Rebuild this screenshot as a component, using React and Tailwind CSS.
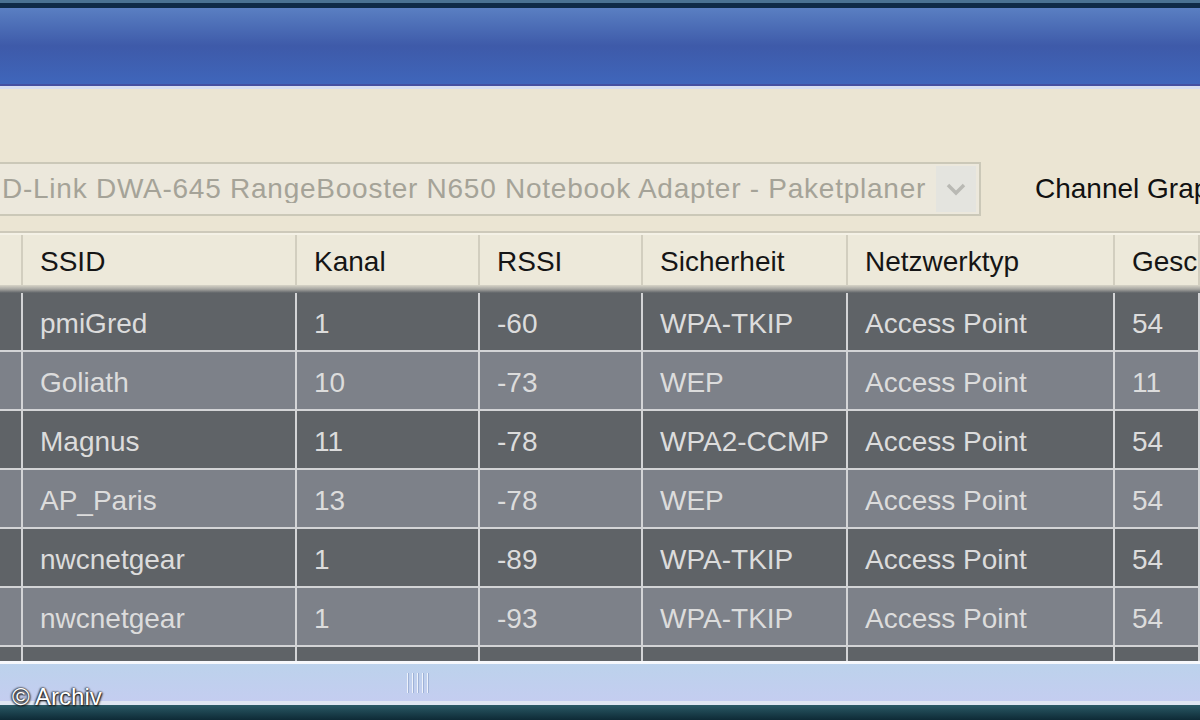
import React from "react";

const rows = [
  ["pmiGred", "1", "-60", "WPA-TKIP", "Access Point", "54"],
  ["Goliath", "10", "-73", "WEP", "Access Point", "11"],
  ["Magnus", "11", "-78", "WPA2-CCMP", "Access Point", "54"],
  ["AP_Paris", "13", "-78", "WEP", "Access Point", "54"],
  ["nwcnetgear", "1", "-89", "WPA-TKIP", "Access Point", "54"],
  ["nwcnetgear", "1", "-93", "WPA-TKIP", "Access Point", "54"],
];

const headers = ["SSID", "Kanal", "RSSI", "Sicherheit", "Netzwerktyp", "Gesc"];
const cols = "grid grid-cols-[23px_274px_183px_163px_205px_267px_1fr]";

export default function App() {
  return (
    <div
      className="w-[1200px] h-[720px] overflow-hidden flex flex-col bg-[#ebe5d3]"
      style={{ fontFamily: '"Liberation Sans", Arial, sans-serif' }}
    >
      {/* title bar */}
      <div className="h-[3px] bg-[#4a7292] shrink-0" />
      <div className="h-[5px] bg-[#0f2b47] shrink-0" />
      <div className="h-[76px] shrink-0 bg-gradient-to-b from-[#5a7fc2] via-[#3e5aa9] to-[#3f66bb]" />
      <div className="h-[2px] bg-[#4450a0] shrink-0" />
      <div className="h-[3px] bg-[#d6def0] shrink-0" />

      {/* toolbar */}
      <div className="h-[73px] shrink-0" />
      <div className="h-[54px] shrink-0 flex items-center overflow-hidden">
        <div className="w-[981px] shrink-0 h-[54px] flex items-center border-y-2 border-r-2 border-[#cbc8b8] bg-[#ece8dc]">
          <div className="flex-1 overflow-hidden whitespace-nowrap pl-[2px] text-[28px] leading-none text-[#a5a398] tracking-[0.75px]">
            D-Link DWA-645 RangeBooster N650 Notebook Adapter - Paketplaner
          </div>
          <div className="w-[40px] h-[46px] mr-[3px] ml-[6px] bg-[#e4e4df] flex items-center justify-center shrink-0">
            <svg width="22" height="14" viewBox="0 0 22 14">
              <path d="M3 3 L11 11 L19 3" fill="none" stroke="#b9b9b4" strokeWidth="3.5" />
            </svg>
          </div>
        </div>
        <div className="ml-[54px] shrink-0 text-[28px] leading-none text-[#111] whitespace-nowrap">Channel Graph</div>
      </div>
      <div className="h-[15px] shrink-0" />
      <div className="h-[2px] bg-[#cdc9ba] shrink-0" />
      <div className="h-[2px] bg-[#f4f1e6] shrink-0" />

      {/* header */}
      <div className="h-[58px] shrink-0 flex flex-col bg-[#ede9da]">
        <div className={`${cols} h-[50px]`}>
          {["", ...headers].map((h, i) => (
            <div key={i} className="flex items-center pl-[17px] pt-[4px] border-r-2 border-[#d2cebf] text-[28px] text-[#151515] whitespace-nowrap overflow-hidden">
              {h}
            </div>
          ))}
        </div>
        <div className="h-[8px] bg-gradient-to-b from-[#d8d5c8] via-[#a9a8a3] to-[#5f6367]" />
      </div>

      {/* rows */}
      {rows.map((r, ri) => (
        <div
          key={ri}
          className={`${cols} h-[59px] shrink-0 border-b-2 border-[#d3d4d6] ${ri % 2 === 0 ? "bg-[#5f6367]" : "bg-[#7d8189]"}`}
        >
          {["", ...r].map((c, ci) => (
            <div key={ci} className="flex items-center pl-[17px] pt-[4px] border-r-2 border-[#d3d4d6] text-[28px] text-[#dcdcdc] whitespace-nowrap overflow-hidden">
              {c}
            </div>
          ))}
        </div>
      ))}
      <div className={`${cols} h-[14px] shrink-0 bg-[#5f6367]`}>
        {[0, 1, 2, 3, 4, 5, 6].map((i) => (
          <div key={i} className="border-r-2 border-[#d3d4d6]" />
        ))}
      </div>

      {/* scrollbar */}
      <div className="relative shrink-0 flex flex-col">
        <div className="h-[3px] bg-[#f6f8fc]" />
        <div className="relative h-[37px] bg-gradient-to-b from-[#bcd2ec] to-[#c4cdf0]">
          <div className="absolute left-[407px] top-[9px] flex gap-[3px]">
            {[0, 1, 2, 3, 4].map((i) => (
              <div key={i} className="w-[2px] h-[20px] bg-[#eef2fb] border-r border-[#9fb2d6]" />
            ))}
          </div>
        </div>
        <div className="h-[4px] bg-[#dfe6f2]" />
        <div
          className="absolute left-[12px] top-[24px] text-[24px] leading-none text-white"
          style={{ textShadow: "0 0 2px #111, 1px 1px 2px #111, -1px 0 2px #333" }}
        >
          © Archiv
        </div>
      </div>
      <div className="flex-1 bg-gradient-to-b from-[#2a5a66] to-[#0e2a36]" />
    </div>
  );
}
